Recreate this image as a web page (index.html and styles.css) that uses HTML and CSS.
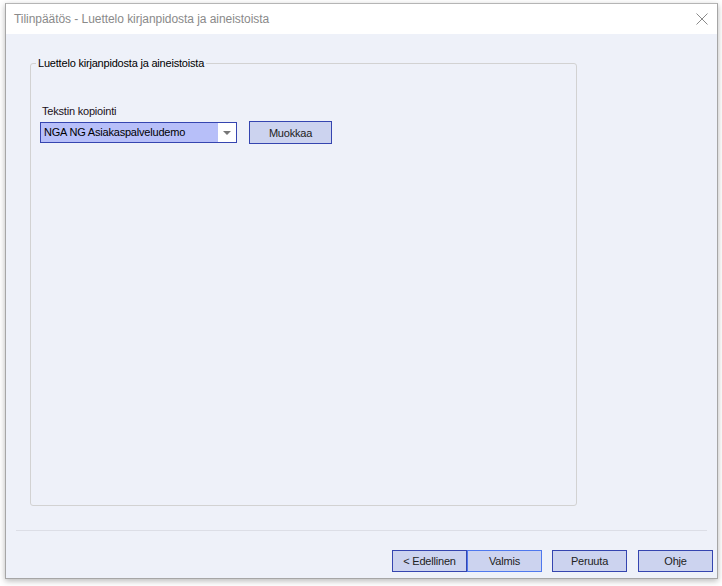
FILE: index.html
```html
<!DOCTYPE html>
<html>
<head>
<meta charset="utf-8">
<link rel="stylesheet" href="styles.css">
</head>
<body>
<div class="window">
  <div class="titlebar">
    <span class="title">Tilinpäätös - Luettelo kirjanpidosta ja aineistoista</span>
    <svg class="close" width="12" height="12" viewBox="0 0 12 12"><path d="M0.5 0.5 L11.5 11.5 M11.5 0.5 L0.5 11.5" stroke="#8a8a8a" stroke-width="1" fill="none"/></svg>
  </div>
  <div class="content">
    <fieldset class="group">
      <legend>Luettelo kirjanpidosta ja aineistoista</legend>
      <div class="field-label">Tekstin kopiointi</div>
      <div class="field-row">
        <div class="combo">
          <span class="combo-text">NGA NG Asiakaspalveludemo</span>
          <span class="combo-btn"><span class="arrow"></span></span>
        </div>
        <div class="btn btn-edit">Muokkaa</div>
      </div>
    </fieldset>
    <div class="separator"></div>
    <div class="buttons">
      <div class="btn btn-foot">&lt; Edellinen</div>
      <div class="btn btn-foot btn-focus">Valmis</div>
      <div class="btn btn-foot btn-gap">Peruuta</div>
      <div class="btn btn-foot btn-gap2">Ohje</div>
    </div>
  </div>
</div>
</body>
</html>
```
FILE: styles.css
```css
html, body {
  margin: 0;
  padding: 0;
  background: #ffffff;
}
body {
  width: 722px;
  height: 586px;
  overflow: hidden;
  font-family: "Liberation Sans", Arial, sans-serif;
}
.window {
  box-sizing: border-box;
  margin: 3px 0 0 5px;
  width: 713px;
  height: 576px;
  border: 1px solid #a6a6a6;
  border-top-color: #b5b5b5;
  background: #eef1f9;
  box-shadow: 0 2px 6px rgba(0,0,0,0.28);
  display: flex;
  flex-direction: column;
}
.titlebar {
  height: 30px;
  background: #ffffff;
  display: flex;
  align-items: center;
  justify-content: space-between;
  padding: 0 9px 0 8px;
  flex: none;
}
.title {
  font-size: 12px;
  color: #8a8a8a;
  letter-spacing: -0.05px;
}
.close {
  display: block;
  margin-top: -1px;
}
.content {
  flex: 1;
  display: flex;
  flex-direction: column;
  font-size: 11px;
  letter-spacing: -0.2px;
  color: #111;
}
.group {
  box-sizing: border-box;
  margin: 22px 0 0 24px;
  width: 547px;
  height: 450px;
  padding: 0 0 0 9px;
  border: 1px solid #d2d2d2;
  border-radius: 3px;
  min-width: 0;
}
.group legend {
  margin-left: -4px;
  padding: 0 2px;
  font-size: 11px;
  line-height: 14px;
  color: #000;
}
.field-label {
  margin-top: 35px;
  margin-left: 2px;
  line-height: 13px;
  color: #1a1020;
}
.field-row {
  display: flex;
  align-items: center;
  margin-top: 3px;
}
.combo {
  box-sizing: border-box;
  width: 197px;
  height: 21px;
  border: 1px solid #3545b0;
  background: #ffffff;
  display: flex;
}
.combo-text {
  flex: 1;
  background: #b7bff9;
  padding-left: 3px;
  line-height: 19px;
  color: #000;
}
.combo-btn {
  width: 18px;
  display: flex;
  align-items: center;
  justify-content: center;
}
.arrow {
  width: 0;
  height: 0;
  border-left: 4px solid transparent;
  border-right: 4px solid transparent;
  border-top: 4px solid #777;
  margin-top: 1px;
}
.btn {
  box-sizing: border-box;
  border: 1px solid #3545b0;
  background: #ccd3ef;
  display: flex;
  align-items: center;
  justify-content: center;
  color: #222;
  font-size: 11px;
}
.btn-edit {
  width: 83px;
  height: 23px;
  margin-left: 12px;
}
.separator {
  margin: 24px 10px 0 10px;
  height: 1px;
  background: #dcdee6;
}
.buttons {
  display: flex;
  justify-content: flex-end;
  margin-top: 19px;
  padding-right: 4px;
}
.btn-foot {
  width: 75px;
  height: 22px;
}
.btn-focus {
  border-color: #4f78ee;
}
.btn-gap {
  margin-left: 10px;
}
.btn-gap2 {
  margin-left: 11px;
}
```
